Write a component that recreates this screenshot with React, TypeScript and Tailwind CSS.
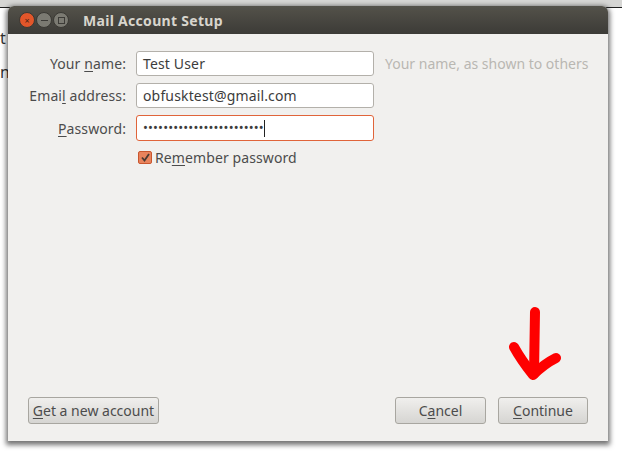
const font = "font-['Noto_Sans',sans-serif]";

function Key({ children }: { children: string }) {
  return <span className="underline underline-offset-2 decoration-1">{children}</span>;
}

function WinButton({ color, children }: { color: string; children: React.ReactNode }) {
  return (
    <div className={`flex h-4 w-4 items-center justify-center rounded-full border border-[#3a3934] ${color}`}>
      {children}
    </div>
  );
}

function Field({
  label,
  value,
  focused,
  children,
}: {
  label: React.ReactNode;
  value?: string;
  focused?: boolean;
  children?: React.ReactNode;
}) {
  return (
    <>
      <div className="whitespace-nowrap pr-[10px] text-right text-[14px] tracking-[0.1px] text-[#4c4c4c]">{label}</div>
      <div
        className={`flex h-full items-center rounded-[3px] border bg-white pl-[6px] text-[14px] tracking-[0.15px] text-[#3c3c3c] ${
          focused ? "border-[#e0643a]" : "border-[#b3b0aa]"
        }`}
      >
        {value}
        {children}
      </div>
    </>
  );
}

function DialogButton({ children, width }: { children: React.ReactNode; width: string }) {
  return (
    <button
      className={`flex h-[27px] ${width} items-center justify-center rounded-[3px] border border-[#a8a6a0] bg-gradient-to-b from-[#f0efed] to-[#d6d5d2] text-[14px] text-[#4c4c4c]`}
    >
      {children}
    </button>
  );
}

export default function App() {
  return (
    <div className={`relative h-[454px] w-[622px] overflow-hidden bg-white ${font}`}>
      <div className="h-[7px] bg-[#d6d6d4]" />
      <div className="h-px bg-[#222]" />
      <span className="absolute left-0 top-[26px] text-[16px] text-[#333]">t</span>
      <span className="absolute left-0 top-[60px] text-[16px] text-[#333]">n</span>

      <div className="absolute left-[8px] top-[6px] flex h-[435px] w-[600px] flex-col overflow-hidden rounded-t-[6px] bg-[#f1f0ee] shadow-[0_2px_5px_2px_rgba(0,0,0,0.55)]">
        <div className="flex h-[28px] shrink-0 items-center bg-gradient-to-b from-[#54524a] to-[#3c3b37] pl-[11px]">
          <div className="flex gap-[1px]">
            <WinButton color="bg-[#e2562a]">
              <span className="text-[9px] leading-none text-[#4a2414]">×</span>
            </WinButton>
            <WinButton color="bg-[#7b7a72]">
              <span className="h-px w-[7px] bg-[#3c3b37]" />
            </WinButton>
            <WinButton color="bg-[#7b7a72]">
              <span className="h-[7px] w-[7px] border border-[#3c3b37]" />
            </WinButton>
          </div>
          <span className="ml-[14px] text-[14px] font-bold tracking-[0.3px] text-[#d8d5cd]">Mail Account Setup</span>
        </div>

        <div className="flex flex-1 flex-col justify-between pb-[17px] pl-[20px] pr-[20px] pt-[17px]">
          <div>
            <div className="relative">
              <div className="grid w-[346px] grid-cols-[108px_238px] grid-rows-[25px_25px_26px] items-center gap-y-[7px]">
                <Field label={<>Your <Key>n</Key>ame:</>} value="Test User" />
                <Field label={<>Emai<Key>l</Key> address:</>} value="obfusktest@gmail.com" />
                <Field label={<><Key>P</Key>assword:</>} focused>
                  <span className="text-[13px]">{"•".repeat(24)}</span>
                  <span className="h-[17px] w-px bg-[#222]" />
                </Field>
              </div>
              <span className="absolute left-[357px] top-[2px] whitespace-nowrap text-[14px] text-[#b9b7b2]">Your name, as shown to others</span>
            </div>
            <div className="ml-[110px] mt-[6px] flex items-center gap-[3px] text-[14px] tracking-[0.1px] text-[#4c4c4c]">
              <div className="flex h-[13px] w-[14px] items-center justify-center rounded-[2px] border border-[#c9562e] bg-[#e8835c]">
                <svg width="11" height="11" viewBox="0 0 11 11" fill="none" stroke="#4a3a32" strokeWidth="1.8">
                  <path d="M2 5.5 L4.5 8.5 L9 2" />
                </svg>
              </div>
              <span>Re<Key>m</Key>ember password</span>
            </div>
          </div>

          <div className="flex items-center justify-between">
            <DialogButton width="w-[131px]"><span><Key>G</Key>et a new account</span></DialogButton>
            <div className="flex gap-[12px]">
              <DialogButton width="w-[91px]"><span>C<Key>a</Key>ncel</span></DialogButton>
              <DialogButton width="w-[90px]"><span><Key>C</Key>ontinue</span></DialogButton>
            </div>
          </div>
        </div>
      </div>

      {/* hand-drawn arrow on top of the screenshot */}
      <svg className="absolute left-0 top-0" width="622" height="454" fill="none" stroke="#fe0000" strokeWidth="10" strokeLinecap="round" strokeLinejoin="round">
        <path d="M535 312 L534 374" />
        <path d="M514 347 C520 358 526 366 533 375 C540 368 548 362 556 358" />
      </svg>
    </div>
  );
}
